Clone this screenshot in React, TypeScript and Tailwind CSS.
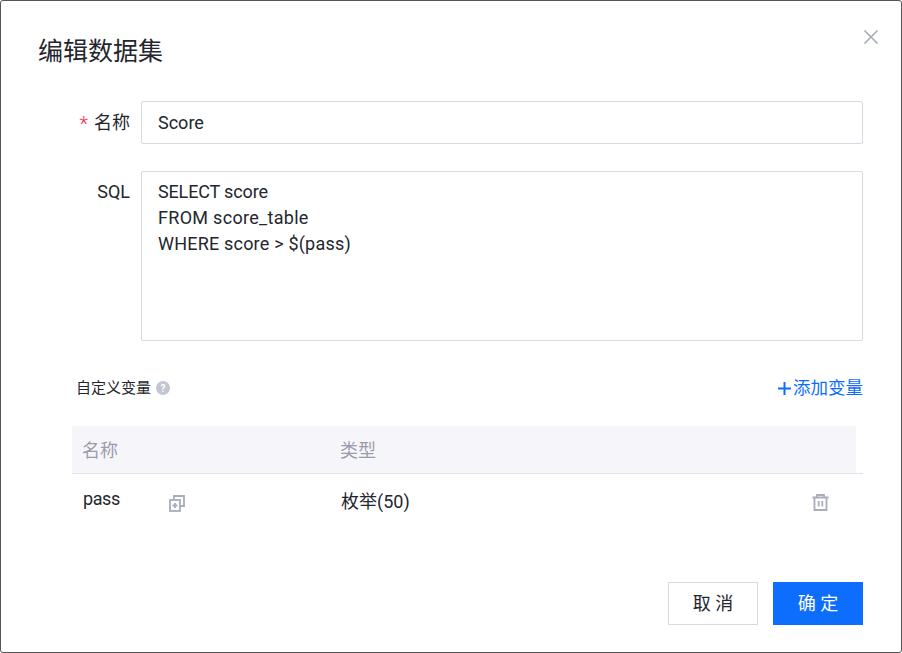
import React from "react";

export default function App() {
  return (
    <div className="w-[902px] h-[653px] bg-white border border-[#555555] rounded-[3px] flex flex-col text-[#23262e] relative font-['Roboto','Noto_Sans_CJK_SC',sans-serif]">
      <button className="absolute left-[862px] top-[28px] text-[#a9acbb]" aria-label="关闭">
        <svg width="16" height="16" viewBox="0 0 16 16" fill="none" stroke="currentColor" strokeWidth="1.7">
          <path d="M1.5 1.5 L14.5 14.5 M14.5 1.5 L1.5 14.5" />
        </svg>
      </button>

      <div className="pl-[37px] pt-[34px] h-[100px] text-[25px] leading-[34px] text-[#23262e]">编辑数据集</div>

      <div className="flex items-center h-[43px]">
        <div className="w-[129px] text-[18px] leading-[24px] flex justify-end items-center">
          <span className="text-[#f5334a] mr-[6px] text-[20px] font-light leading-[24px] pt-[3px]">*</span>名称
        </div>
        <div className="ml-[11px] w-[722px] h-[43px] border border-[#d8d9e2] rounded-[2px] pl-[16px] flex items-center text-[18px]">
          Score
        </div>
      </div>

      <div className="flex mt-[27px] h-[170px]">
        <div className="w-[129px] text-right text-[18px] leading-[26px] pt-[8px]">SQL</div>
        <div className="ml-[11px] w-[722px] h-[170px] border border-[#d8d9e2] rounded-[2px] pl-[16px] pt-[7px] text-[18px] leading-[26px]">
          <div className="tracking-[-0.15px]">SELECT score</div>
          <div className="tracking-[0.3px]">FROM score_table</div>
          <div className="tracking-[0.2px]">WHERE score &gt; $(pass)</div>
        </div>
      </div>

      <div className="flex items-center justify-between h-[24px] mt-[35px] pl-[75px] pr-[38px]">
        <div className="flex items-center text-[15px]">
          <span>自定义变量</span>
          <span className="ml-[5px] w-[14px] h-[14px] rounded-full bg-[#c3c5d3] text-white text-[10px] font-bold flex items-center justify-center">?</span>
        </div>
        <div className="flex items-center text-[#0d6efd] text-[17.5px]">
          <svg width="15" height="15" viewBox="0 0 15 15" fill="none" stroke="currentColor" strokeWidth="2" className="mr-[1px]">
            <path d="M7.5 1 V14 M1 7.5 H14" />
          </svg>
          添加变量
        </div>
      </div>

      <div className="ml-[71px] w-[791px] mt-[26px]">
        <div className="w-[784px] h-[47px] pt-[2px] bg-[#f6f6fa] rounded-t-[2px] flex items-center text-[#9a9cab] text-[18px]">
          <div className="w-[268px] pl-[10px]">名称</div>
          <div>类型</div>
        </div>
        <div className="h-[1px] bg-[#e3e4ea]" />
        <div className="h-[56px] flex items-center text-[18px]">
          <div className="w-[97px] pl-[11px] -mt-[8px] tracking-[-0.4px]">pass</div>
          <div className="w-[171px] text-[#a9acbb]">
            <svg width="16" height="17" viewBox="0 0 16 17" fill="none" stroke="currentColor" strokeWidth="1.8" className="mt-[2px]">
              <path d="M5 5 V1 H15 V11 H11" />
              <rect x="1" y="5" width="10" height="11" />
              <path d="M6 8 V13 M3.5 10.5 H8.5" />
            </svg>
          </div>
          <div className="w-[472px] -mt-[2px] pl-[1px]">枚举(50)</div>
          <div className="text-[#a9acbb]">
            <svg width="17" height="17" viewBox="0 0 17 17" fill="none" stroke="currentColor" strokeWidth="1.8">
              <path d="M0.5 3.5 H16.5 M5 3.5 V1 H12 V3.5" />
              <path d="M2.5 3.5 V16 H14.5 V3.5" />
              <path d="M6.7 7 V12.5 M10.3 7 V12.5" />
            </svg>
          </div>
        </div>
      </div>

      <div className="flex justify-end gap-[15px] pr-[38px] mt-[52px]">
        <button className="w-[90px] h-[43px] border border-[#d8d9e2] bg-white text-[18px] text-[#23262e]">取 消</button>
        <button className="w-[90px] h-[43px] bg-[#0d6efd] text-white text-[18px]">确 定</button>
      </div>
    </div>
  );
}
